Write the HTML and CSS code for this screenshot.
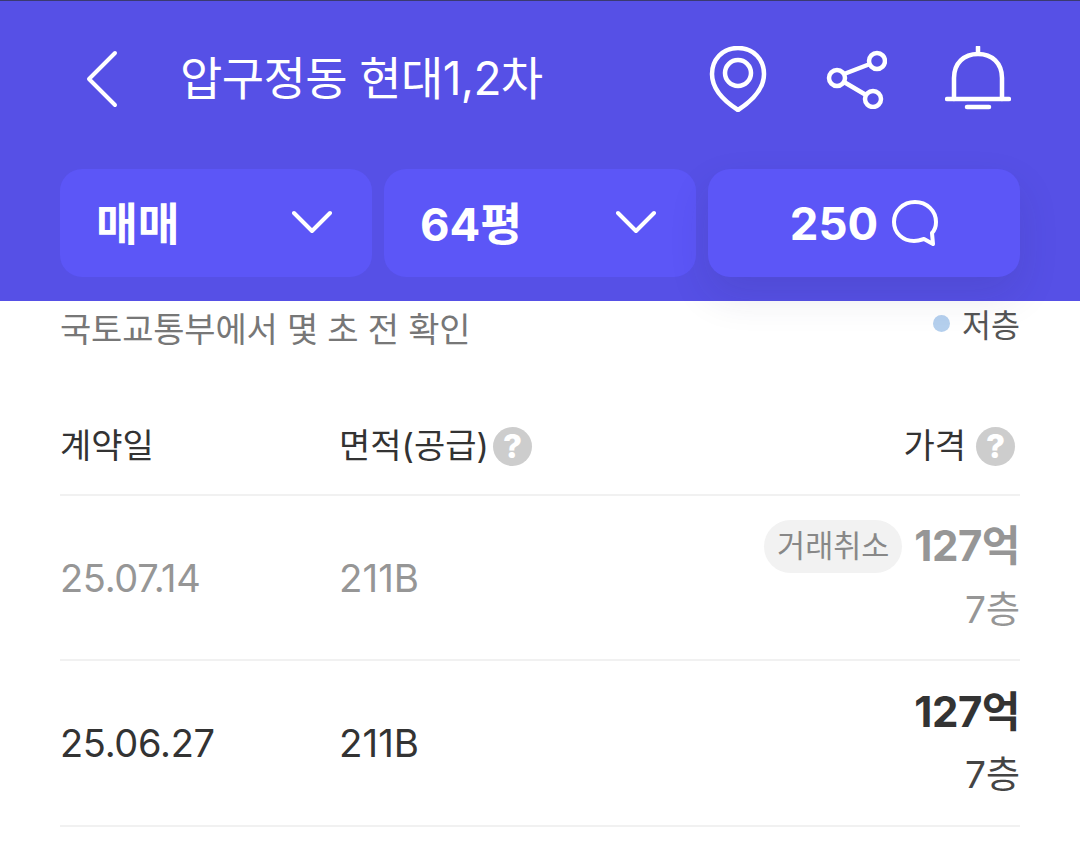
FILE: index.html
```html
<!DOCTYPE html>
<html lang="ko">
<head>
    <meta charset="UTF-8">
    <title>압구정동 현대1,2차</title>
    <link rel="stylesheet" href="styles.css">
</head>
<body>
    <header class="top-header">
        <div class="title-bar">
            <svg class="back-icon" width="34" height="58" viewBox="0 0 34 58" fill="none" stroke="#fff" stroke-width="4" stroke-linecap="round" stroke-linejoin="round">
                <path d="M29 3 L3 29 L29 55"/>
            </svg>
            <h1 class="page-title">압구정동 현대1,2차</h1>
            <div class="header-icons">
                <svg width="58" height="66" viewBox="0 0 58 66" fill="none" stroke="#fff" stroke-width="4.5" stroke-linejoin="round">
                    <path d="M29 2 C13 2 3 14 3 28 C3 43 15 55 29 64 C43 55 55 43 55 28 C55 14 45 2 29 2 Z"/>
                    <circle cx="29" cy="27" r="13"/>
                </svg>
                <svg width="62" height="60" viewBox="0 0 62 60" fill="none" stroke="#fff" stroke-width="4.5">
                    <circle cx="52" cy="12" r="8"/>
                    <circle cx="12" cy="29" r="8"/>
                    <circle cx="48" cy="50" r="8"/>
                    <path d="M19 25 L45 15 M19 33 L41 46"/>
                </svg>
                <svg width="66" height="66" viewBox="0 0 66 66" fill="none" stroke="#fff" stroke-width="4.5" stroke-linecap="round">
                    <path d="M33 1 V6"/>
                    <path d="M9 53 V32 C9 17 19 8 33 8 C47 8 57 17 57 32 V53"/>
                    <path d="M2 53 H64"/>
                    <path d="M22 61 H44"/>
                </svg>
            </div>
        </div>
        <div class="filters">
            <button class="filter-card">
                <span class="filter-label">매매</span>
                <svg width="40" height="24" viewBox="0 0 40 24" fill="none" stroke="#fff" stroke-width="4" stroke-linecap="round" stroke-linejoin="round"><path d="M2 3 L20 21 L38 3"/></svg>
            </button>
            <button class="filter-card">
                <span class="filter-label">64평</span>
                <svg width="40" height="24" viewBox="0 0 40 24" fill="none" stroke="#fff" stroke-width="4" stroke-linecap="round" stroke-linejoin="round"><path d="M2 3 L20 21 L38 3"/></svg>
            </button>
            <button class="filter-card comment-card">
                <span>250</span>
                <svg width="46" height="46" viewBox="0 0 46 46" fill="none" stroke="#fff" stroke-width="4" stroke-linejoin="round"><path d="M23 2 C11 2 2 11 2 22 C2 33 11 41 22 41 C26 41 29 40 32 39 L41 44 L40 33 C43 30 44 26 44 22 C44 11 35 2 23 2 Z"/></svg>
            </button>
        </div>
    </header>

    <main class="content">
        <div class="info-line">
            <span class="source-text">국토교통부에서 몇 초 전 확인</span>
            <span class="legend"><i class="legend-dot"></i>저층</span>
        </div>

        <div class="deal-row table-head">
            <div class="col-date">계약일</div>
            <div class="col-area">면적(공급)<span class="help-icon">?</span></div>
            <div class="col-price">가격<span class="help-icon">?</span></div>
        </div>

        <div class="deal-row deal-item canceled">
            <div class="col-date">25.07.14</div>
            <div class="col-area">211B</div>
            <div class="col-price">
                <div class="price-line"><span class="cancel-badge">거래취소</span><strong>127억</strong></div>
                <div class="floor">7층</div>
            </div>
        </div>

        <div class="deal-row deal-item">
            <div class="col-date">25.06.27</div>
            <div class="col-area">211B</div>
            <div class="col-price">
                <div class="price-line"><strong>127억</strong></div>
                <div class="floor">7층</div>
            </div>
        </div>
    </main>
</body>
</html>
```

FILE: styles.css
```css
* {
    margin: 0;
    padding: 0;
    box-sizing: border-box;
}

html, body {
    height: 841px;
    overflow: hidden;
}

body {
    font-family: Inter, 'Noto Sans CJK KR', sans-serif;
    background: white;
    color: #333;
}

.top-header {
    background: #5650e6;
    border-top: 1px solid #3a3a70;
    height: 301px;
    padding: 0 60px;
    position: relative;
    z-index: 1;
}

.title-bar {
    display: flex;
    align-items: center;
    height: 168px;
}

.back-icon {
    margin-left: 26px;
    margin-bottom: 12px;
    flex-shrink: 0;
}

.page-title {
    font-size: 46px;
    font-weight: 400;
    color: white;
    margin-left: 60px;
    margin-bottom: 20px;
    letter-spacing: -0.6px;
}

.header-icons {
    margin-left: auto;
    margin-right: 9px;
    margin-bottom: 12px;
    display: flex;
    align-items: center;
    gap: 58px;
}

.filters {
    display: grid;
    grid-template-columns: repeat(3, 1fr);
    gap: 12px;
}

.filter-card {
    height: 108px;
    background: #5c56f7;
    border: none;
    border-radius: 22px;
    color: white;
    font-family: inherit;
    font-size: 45.5px;
    font-weight: 700;
    display: flex;
    align-items: center;
    justify-content: space-between;
    padding: 0 40px 2px 36px;
}

.filter-label {
    margin-bottom: 3px;
}

.comment-card {
    justify-content: center;
    gap: 14px;
    padding: 0 38px;
    box-shadow: 0 18px 40px rgba(40, 40, 80, 0.12);
}

.content {
    padding: 0 60px;
}

.info-line {
    display: flex;
    justify-content: space-between;
    height: 56px;
    color: #777;
    font-size: 31.5px;
}

.source-text {
    font-size: 34px;
    line-height: 58px;
    letter-spacing: -0.2px;
}

.legend {
    display: flex;
    align-items: center;
    gap: 12px;
    height: 44px;
    color: #555;
}

.legend-dot {
    width: 17px;
    height: 17px;
    border-radius: 50%;
    background: #b5d0ee;
}

.deal-row {
    display: grid;
    grid-template-columns: 280px 1fr auto;
    align-items: center;
    border-bottom: 2px solid #f1f1f1;
}

.table-head {
    height: 139px;
    padding-top: 36px;
    font-size: 34px;
}

.col-area,
.col-price {
    display: flex;
    align-items: center;
}

.col-area {
    margin-left: -1px;
}

.help-icon {
    width: 39px;
    height: 39px;
    border-radius: 50%;
    background: #cdcdcd;
    color: white;
    font-size: 33px;
    font-weight: 800;
    line-height: 39px;
    text-align: center;
    margin-left: 4px;
    margin-top: 5px;
}

.col-price .help-icon {
    margin-left: 10px;
    margin-right: 5px;
}

.deal-item {
    height: 165px;
    font-size: 38px;
}

.deal-item + .deal-item {
    height: 166px;
}

.deal-item .col-date {
    letter-spacing: -0.3px;
}

.deal-item .col-area {
    font-size: 38.5px;
}

.deal-item .col-price {
    display: block;
    text-align: right;
}

.price-line {
    display: flex;
    align-items: center;
    justify-content: flex-end;
    gap: 12px;
    height: 52px;
}

.price-line strong {
    font-size: 42px;
    font-weight: 700;
    letter-spacing: -0.5px;
    margin-bottom: 6px;
}

.floor {
    font-size: 37px;
    height: 52px;
    line-height: 52px;
    margin-top: 12px;
    color: #444;
}

.cancel-badge {
    background: #f2f2f2;
    color: #888;
    font-size: 30.5px;
    border-radius: 27px;
    height: 53px;
    line-height: 52px;
    padding: 0 13px;
    margin-top: 1px;
}

.canceled,
.canceled .floor {
    color: #969696;
}
```
